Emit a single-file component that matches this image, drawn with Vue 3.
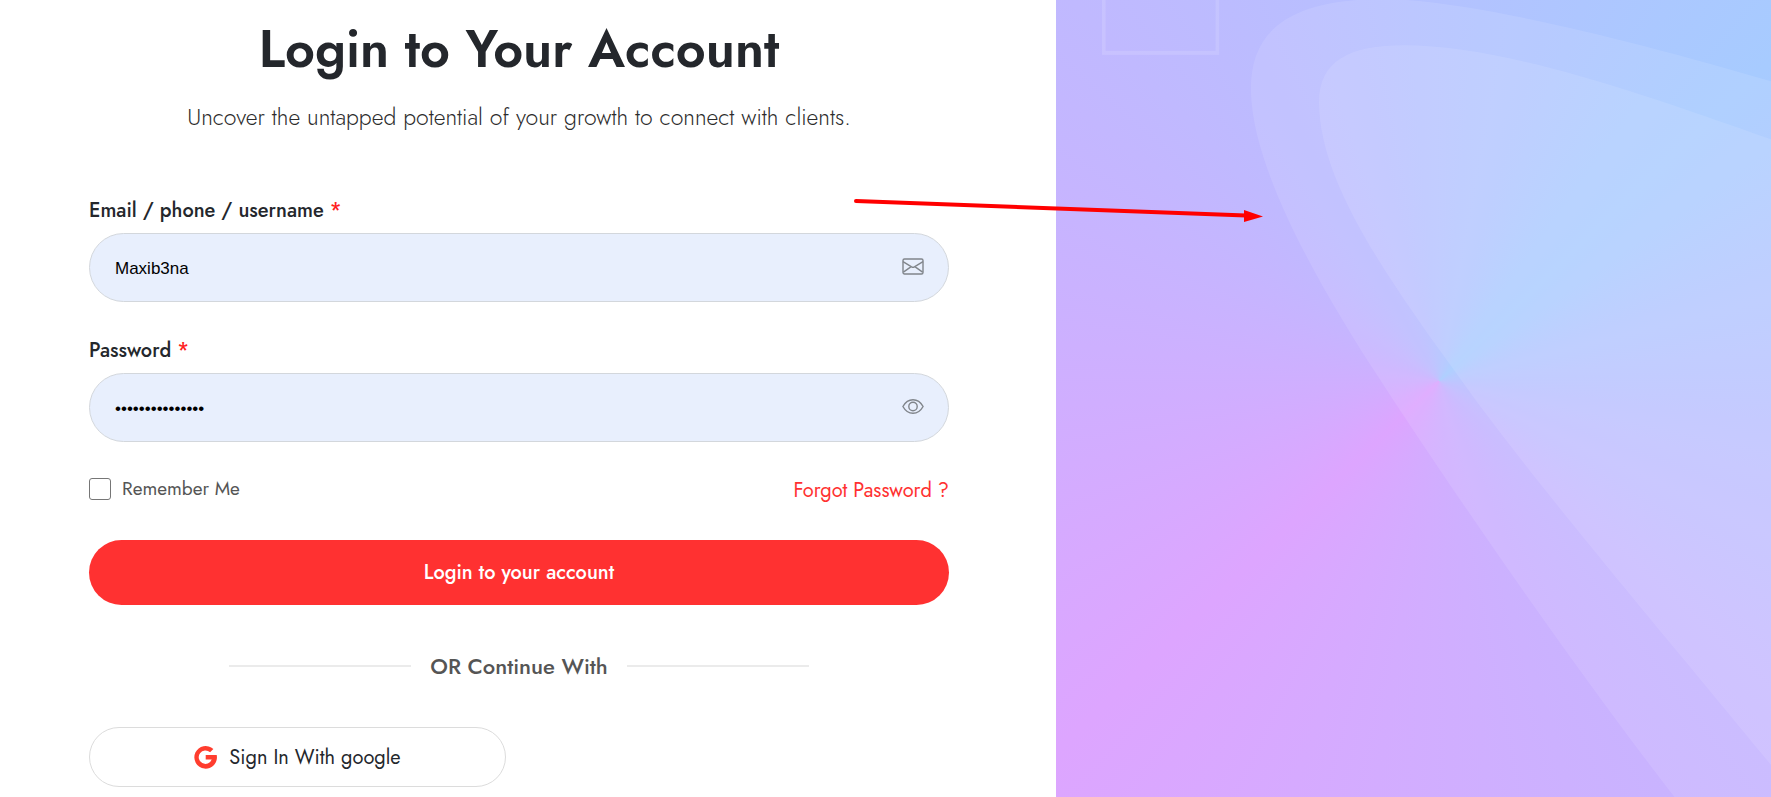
<script setup>
import { ref } from 'vue'

const username = ref('Maxib3na')
const password = ref('abcdefghijklmno')
const remember = ref(false)
const visible = ref(false)
</script>

<template>
  <main class="page">
    <section class="login">
      <form class="form" @submit.prevent>
        <h1 class="title">Login to Your Account</h1>
        <p class="subtitle">Uncover the untapped potential of your growth to connect with clients.</p>

        <div class="group">
          <label class="label" for="username">Email / phone / username <span class="star">*</span></label>
          <div class="field">
            <input id="username" v-model="username" class="input" type="text" autocomplete="off" />
            <svg class="icon" viewBox="0 0 22 22" aria-hidden="true">
              <rect x="1" y="3" width="20" height="15" rx="1.5" />
              <path d="M1 5.7 9.6 10.900q1.4.8 2.8 0L21 5.7M1.4 16.100l7.8-5.4M20.6 16.100l-7.8-5.4" />
            </svg>
          </div>
        </div>

        <div class="group">
          <label class="label" for="password">Password <span class="star">*</span></label>
          <div class="field">
            <input id="password" v-model="password" class="input" :type="visible ? 'text' : 'password'" autocomplete="off" />
            <button class="toggle" type="button" aria-label="Show password" @click="visible = !visible">
              <svg class="icon" viewBox="0 0 22 22" aria-hidden="true">
                <path d="M.9 10.500C3 6.700 6.500 3.700 11 3.700S19 6.700 21.100 10.500C19 14.300 15.500 17.300 11 17.300S3 14.300.9 10.500Z" />
                <circle cx="11" cy="10.500" r="4.200" />
              </svg>
            </button>
          </div>
        </div>

        <div class="options">
          <label class="remember" for="remember">
            <input id="remember" v-model="remember" class="check" type="checkbox" />
            Remember Me
          </label>
          <a class="forgot" href="#">Forgot Password ?</a>
        </div>

        <button class="submit" type="submit">Login to your account</button>

        <div class="divider">OR Continue With</div>

        <button class="google" type="button">
          <svg class="g-logo" viewBox="0 0 24 24" aria-hidden="true">
            <path d="M20.200 3.200A11.800 11.800 0 1 0 23.700 9.400H12.200v4.700h6.300A7 7 0 1 1 16.800 6.600Z" />
          </svg>
          Sign In With google
        </button>
      </form>
    </section>

    <aside class="art">
      <svg class="shapes" viewBox="13 0 1555 1568" preserveAspectRatio="none" aria-hidden="true">
        <rect class="frame" x="117" y="-150" width="247" height="254" />
        <path class="glow" d="M1358 1568C1150 1325 900 1000 720 750C600 585 440 340 437 180C434 60 520 0 720-2C900-2 1250 75 1568 160V1568Z" />
        <path class="glow" d="M1568 1505C1350 1265 1050 945 900 755C740 555 588 365 585 205C583 120 650 89 770 89C980 89 1260 175 1568 274Z" />
      </svg>
    </aside>

    <svg class="arrow" viewBox="0 0 412 26" aria-hidden="true">
      <path class="shaft" d="M4 4 394 18.500" />
      <path class="head" d="M392 13 411 19.500 392 25Z" />
    </svg>
  </main>
</template>

<style>
body {
  background: #fff;
}
</style>

<style scoped>
.page {
  position: relative;
  display: grid;
  grid-template-columns: 1056fr 715fr;
  min-height: 100vh;
  overflow: hidden;
  font-family: Jost, Lato, sans-serif;
  color: #24272c;
}

.login {
  padding: 19px 107px 9px 89px;
}

.form {
  display: flex;
  flex-direction: column;
}

.title {
  margin: 0;
  font-size: 52px;
  line-height: 60px;
  font-weight: 600;
  text-align: center;
}

.subtitle {
  margin: 23px 0 32px;
  font-size: 23px;
  line-height: 30px;
  font-weight: 300;
  color: #2c2c2c;
  text-align: center;
}

.group {
  margin-top: 32px;
}

.label {
  display: block;
  margin-bottom: 7px;
  font-size: 20px;
  line-height: 30px;
  font-weight: 500;
}

.group + .group {
  margin-top: 34px;
}

.star {
  color: #ff1f1f;
}

.field {
  display: flex;
  align-items: center;
  height: 69px;
  padding: 0 24px 0 25px;
  box-sizing: border-box;
  border: 1px solid #d3d7dc;
  border-radius: 35px;
  background: #e8effd;
}

.input {
  flex: 1;
  min-width: 0;
  padding: 2px 0 0;
  border: 0;
  outline: 0;
  background: transparent;
  color: #000;
  font: 17px/24px "Liberation Sans", Arial, sans-serif;
}

.toggle {
  display: flex;
  padding: 0;
  border: 0;
  background: none;
  cursor: pointer;
}

.icon {
  display: block;
  width: 22px;
  height: 22px;
  margin-bottom: 2px;
  fill: none;
  stroke: #80858b;
  stroke-width: 1.4;
}

.options {
  display: flex;
  align-items: flex-start;
  justify-content: space-between;
  margin: 33px 0 34px;
}

.remember {
  display: flex;
  align-items: center;
  gap: 11px;
  font-size: 19px;
  line-height: 28px;
  color: #555;
}

.check {
  appearance: none;
  width: 22px;
  height: 22px;
  margin: 0;
  box-sizing: border-box;
  border: 1px solid #767676;
  border-radius: 3px;
  background: #fff;
}

.check:checked {
  background: #ff3131;
}

.forgot {
  font-size: 20px;
  line-height: 31px;
  color: #ff3131;
  text-decoration: none;
}

.submit {
  height: 65px;
  border: 0;
  border-radius: 33px;
  background: #ff3131;
  color: #fff;
  font: inherit;
  font-size: 20px;
  font-weight: 500;
  cursor: pointer;
}

.divider {
  display: flex;
  align-items: center;
  justify-content: center;
  gap: 19px;
  margin: 46px 0;
  font-size: 22px;
  line-height: 30px;
  font-weight: 500;
  color: #555;
}

.divider::before,
.divider::after {
  content: "";
  width: 182px;
  height: 2px;
  background: #ebebeb;
}

.google {
  display: flex;
  align-items: center;
  justify-content: center;
  gap: 12px;
  width: 417px;
  height: 60px;
  border: 1px solid #dcdcdc;
  border-radius: 30px;
  background: #fff;
  color: #24272c;
  font: inherit;
  font-size: 20px;
  cursor: pointer;
}

.g-logo {
  width: 23px;
  height: 23px;
  overflow: visible;
  fill: #ff3d2e;
}

.art {
  position: relative;
  background: conic-gradient(from 46deg at 53.6% 381px, #a7cbff, #c5b6ff 90deg, #dda5ff 180deg, #c0b9ff 270deg, #a7cbff);
}

.shapes {
  position: absolute;
  inset: 0;
  width: 100%;
  height: 100%;
}

.glow {
  fill: rgba(255, 255, 255, 0.1);
}

.frame {
  fill: none;
  stroke: rgba(255, 255, 255, 0.13);
  stroke-width: 8;
}

.arrow {
  position: absolute;
  top: 197px;
  left: 852px;
  width: 412px;
  height: 26px;
  pointer-events: none;
}

.shaft {
  fill: none;
  stroke: #f00;
  stroke-width: 4;
  stroke-linecap: round;
}

.head {
  fill: #f00;
}
</style>
